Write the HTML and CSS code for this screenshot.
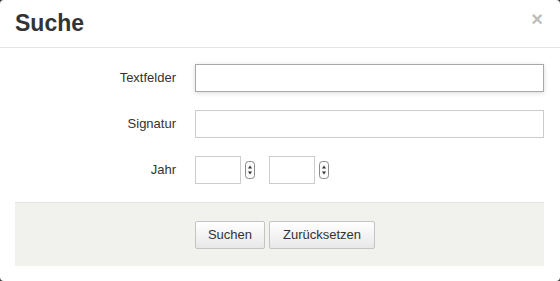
FILE: index.html
```html
<!DOCTYPE html>
<html lang="de">
<head>
    <meta charset="UTF-8">
    <meta name="viewport" content="width=device-width, initial-scale=1.0">
    <title>Suche</title>
    <link rel="stylesheet" href="styles.css">
</head>
<body>
    <div class="modal">
        <div class="modal-header">
            <h3 class="title">Suche</h3>
            <span class="close">&times;</span>
        </div>
        <form class="modal-body">
            <label class="label">Textfelder</label>
            <div class="field"><input type="text" class="input focused"></div>

            <label class="label">Signatur</label>
            <div class="field"><input type="text" class="input"></div>

            <label class="label">Jahr</label>
            <div class="field years">
                <input type="text" class="input small">
                <svg class="spin" width="10" height="18" viewBox="0 0 10 18">
                    <rect x="0.5" y="0.5" width="9" height="17" rx="3" fill="#fafafa" stroke="#8a8a8a"/>
                    <path d="M3 7.5 L5 4.5 L7 7.5 Z" fill="#333"/>
                    <path d="M3 10.5 L5 13.5 L7 10.5 Z" fill="#333"/>
                </svg>
                <input type="text" class="input small second">
                <svg class="spin" width="10" height="18" viewBox="0 0 10 18">
                    <rect x="0.5" y="0.5" width="9" height="17" rx="3" fill="#fafafa" stroke="#8a8a8a"/>
                    <path d="M3 7.5 L5 4.5 L7 7.5 Z" fill="#333"/>
                    <path d="M3 10.5 L5 13.5 L7 10.5 Z" fill="#333"/>
                </svg>
            </div>
        </form>
        <div class="modal-footer">
            <button class="btn btn-search">Suchen</button>
            <button class="btn btn-reset">Zurücksetzen</button>
        </div>
    </div>
</body>
</html>
```

FILE: styles.css
```css
body {
    margin: 0;
    background-color: #3a3a3a;
    font-family: "Liberation Sans", Arial, sans-serif;
    color: #333;
}

.modal {
    width: 560px;
    height: 281px;
    background-color: #fff;
    border-radius: 4px;
    overflow: hidden;
}

.modal-header {
    height: 47px;
    border-bottom: 1px solid #e5e5e5;
    display: flex;
    justify-content: space-between;
    align-items: flex-start;
    padding: 0 16px 0 15px;
}

.title {
    margin: 0;
    padding-top: 8px;
    font-size: 23px;
    line-height: 30px;
    font-weight: bold;
    color: #333;
}

.close {
    font-size: 20px;
    font-weight: bold;
    line-height: 20px;
    color: #bdbdbd;
    padding-top: 9px;
    margin-right: 1px;
}

.modal-body {
    display: grid;
    grid-template-columns: 161px 1fr;
    column-gap: 19px;
    row-gap: 18px;
    padding: 16px 16px 18px 15px;
    margin: 0;
}

.label {
    font-size: 13px;
    line-height: 28px;
    text-align: right;
    color: #333;
}

.field {
    display: flex;
    align-items: center;
}

.input {
    width: 100%;
    height: 28px;
    box-sizing: border-box;
    border: 1px solid #ccc;
    background-color: #fff;
    margin: 0;
    padding: 0 6px;
    font: inherit;
}

.input.focused {
    border-color: #a8a8a8;
    box-shadow: 0 1px 5px rgba(0, 0, 0, 0.15);
}

.input.small {
    width: 46px;
}

.input.second {
    margin-left: 14px;
}

.spin {
    margin-left: 4px;
    flex: none;
}

.modal-footer {
    margin: 0 16px 0 15px;
    height: 63px;
    border-top: 1px solid #e3e3e0;
    background-color: #f1f1ee;
    display: flex;
    align-items: center;
    gap: 4px;
    padding-left: 180px;
}

.btn {
    height: 28px;
    box-sizing: border-box;
    border: 1px solid #c4c4c4;
    border-radius: 2px;
    background: linear-gradient(#ffffff, #e8e8e8);
    font-family: inherit;
    font-size: 13px;
    color: #333;
    padding: 0;
}

.btn-search {
    width: 70px;
}

.btn-reset {
    width: 106px;
}
```
